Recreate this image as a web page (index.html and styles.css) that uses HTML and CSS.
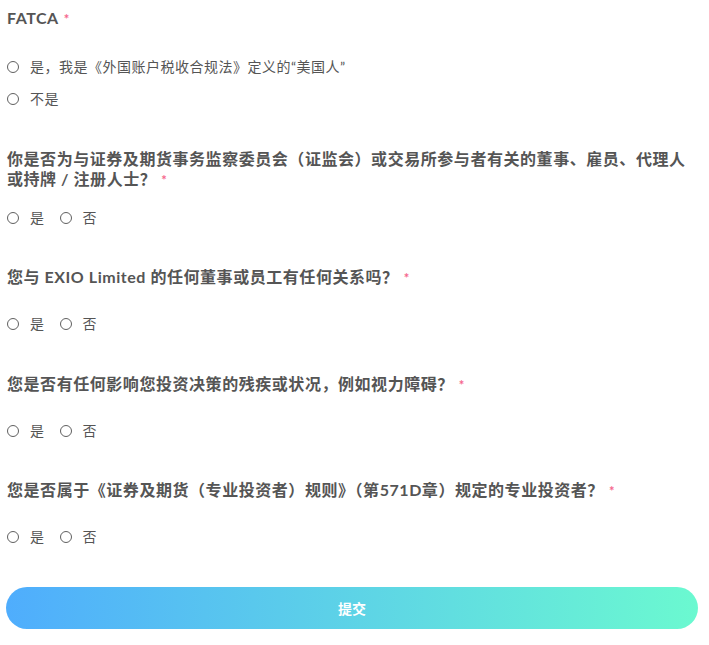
FILE: index.html
```html
<!DOCTYPE html>
<html lang="zh-CN">
<head>
    <meta charset="UTF-8">
    <meta name="viewport" content="width=device-width, initial-scale=1.0">
    <title>FATCA</title>
    <link rel="stylesheet" href="styles.css">
</head>
<body>
    <form class="survey">
        <div class="field">
            <div class="field-label">FATCA<span class="req">*</span></div>
            <div class="choices choices-stack">
                <label class="choice"><span class="dot"></span>是，我是《外国账户税收合规法》定义的“美国人”</label>
                <label class="choice"><span class="dot"></span>不是</label>
            </div>
        </div>
        <div class="field">
            <div class="field-label">你是否为与证券及期货事务监察委员会（证监会）或交易所参与者有关的董事、雇员、代理人或持牌 / 注册人士？<span class="req">*</span></div>
            <div class="choices choices-tight">
                <label class="choice"><span class="dot"></span>是</label>
                <label class="choice"><span class="dot"></span>否</label>
            </div>
        </div>
        <div class="field">
            <div class="field-label">您与 EXIO Limited 的任何董事或员工有任何关系吗？<span class="req">*</span></div>
            <div class="choices">
                <label class="choice"><span class="dot"></span>是</label>
                <label class="choice"><span class="dot"></span>否</label>
            </div>
        </div>
        <div class="field">
            <div class="field-label">您是否有任何影响您投资决策的残疾或状况，例如视力障碍？<span class="req">*</span></div>
            <div class="choices">
                <label class="choice"><span class="dot"></span>是</label>
                <label class="choice"><span class="dot"></span>否</label>
            </div>
        </div>
        <div class="field">
            <div class="field-label">您是否属于《证券及期货（专业投资者）规则》（第571D章）规定的专业投资者？<span class="req">*</span></div>
            <div class="choices">
                <label class="choice"><span class="dot"></span>是</label>
                <label class="choice"><span class="dot"></span>否</label>
            </div>
        </div>
        <button type="button" class="submit-btn">提交</button>
    </form>
</body>
</html>
```

FILE: styles.css
```css
body {
    margin: 0;
    padding: 0;
    background: #fff;
    font-family: 'Lato', 'Noto Sans CJK SC', sans-serif;
    color: #555;
}
.survey {
    padding: 8px 11px 0 6px;
}
.field {
    margin-bottom: 39.5px;
}
.field-label {
    font-size: 16px;
    font-weight: bold;
    line-height: 20px;
    letter-spacing: 0.55px;
    color: #555;
    padding-left: 1px;
}
.req {
    color: #f5668c;
    margin-left: 5px;
    font-size: 13px;
}
.choices {
    display: flex;
    gap: 14px;
    margin-top: 26px;
}
.choices-tight {
    margin-top: 18px;
}
.choices-stack {
    flex-direction: column;
    gap: 12px;
    margin-top: 28px;
}
.choice {
    display: flex;
    align-items: center;
    gap: 11px;
    font-size: 14px;
    line-height: 20px;
    letter-spacing: 0.5px;
    color: #555;
    padding-left: 1px;
}
.dot {
    width: 10px;
    height: 10px;
    border: 1.5px solid #606060;
    border-radius: 50%;
    flex-shrink: 0;
}
.submit-btn {
    display: block;
    width: 100%;
    height: 42px;
    border: none;
    border-radius: 21px;
    background: linear-gradient(90deg, #4fadfd, #6bf9d0);
    color: #fff;
    font-family: 'Lato', 'Noto Sans CJK SC', sans-serif;
    font-size: 14px;
    font-weight: bold;
    cursor: pointer;
}
```
